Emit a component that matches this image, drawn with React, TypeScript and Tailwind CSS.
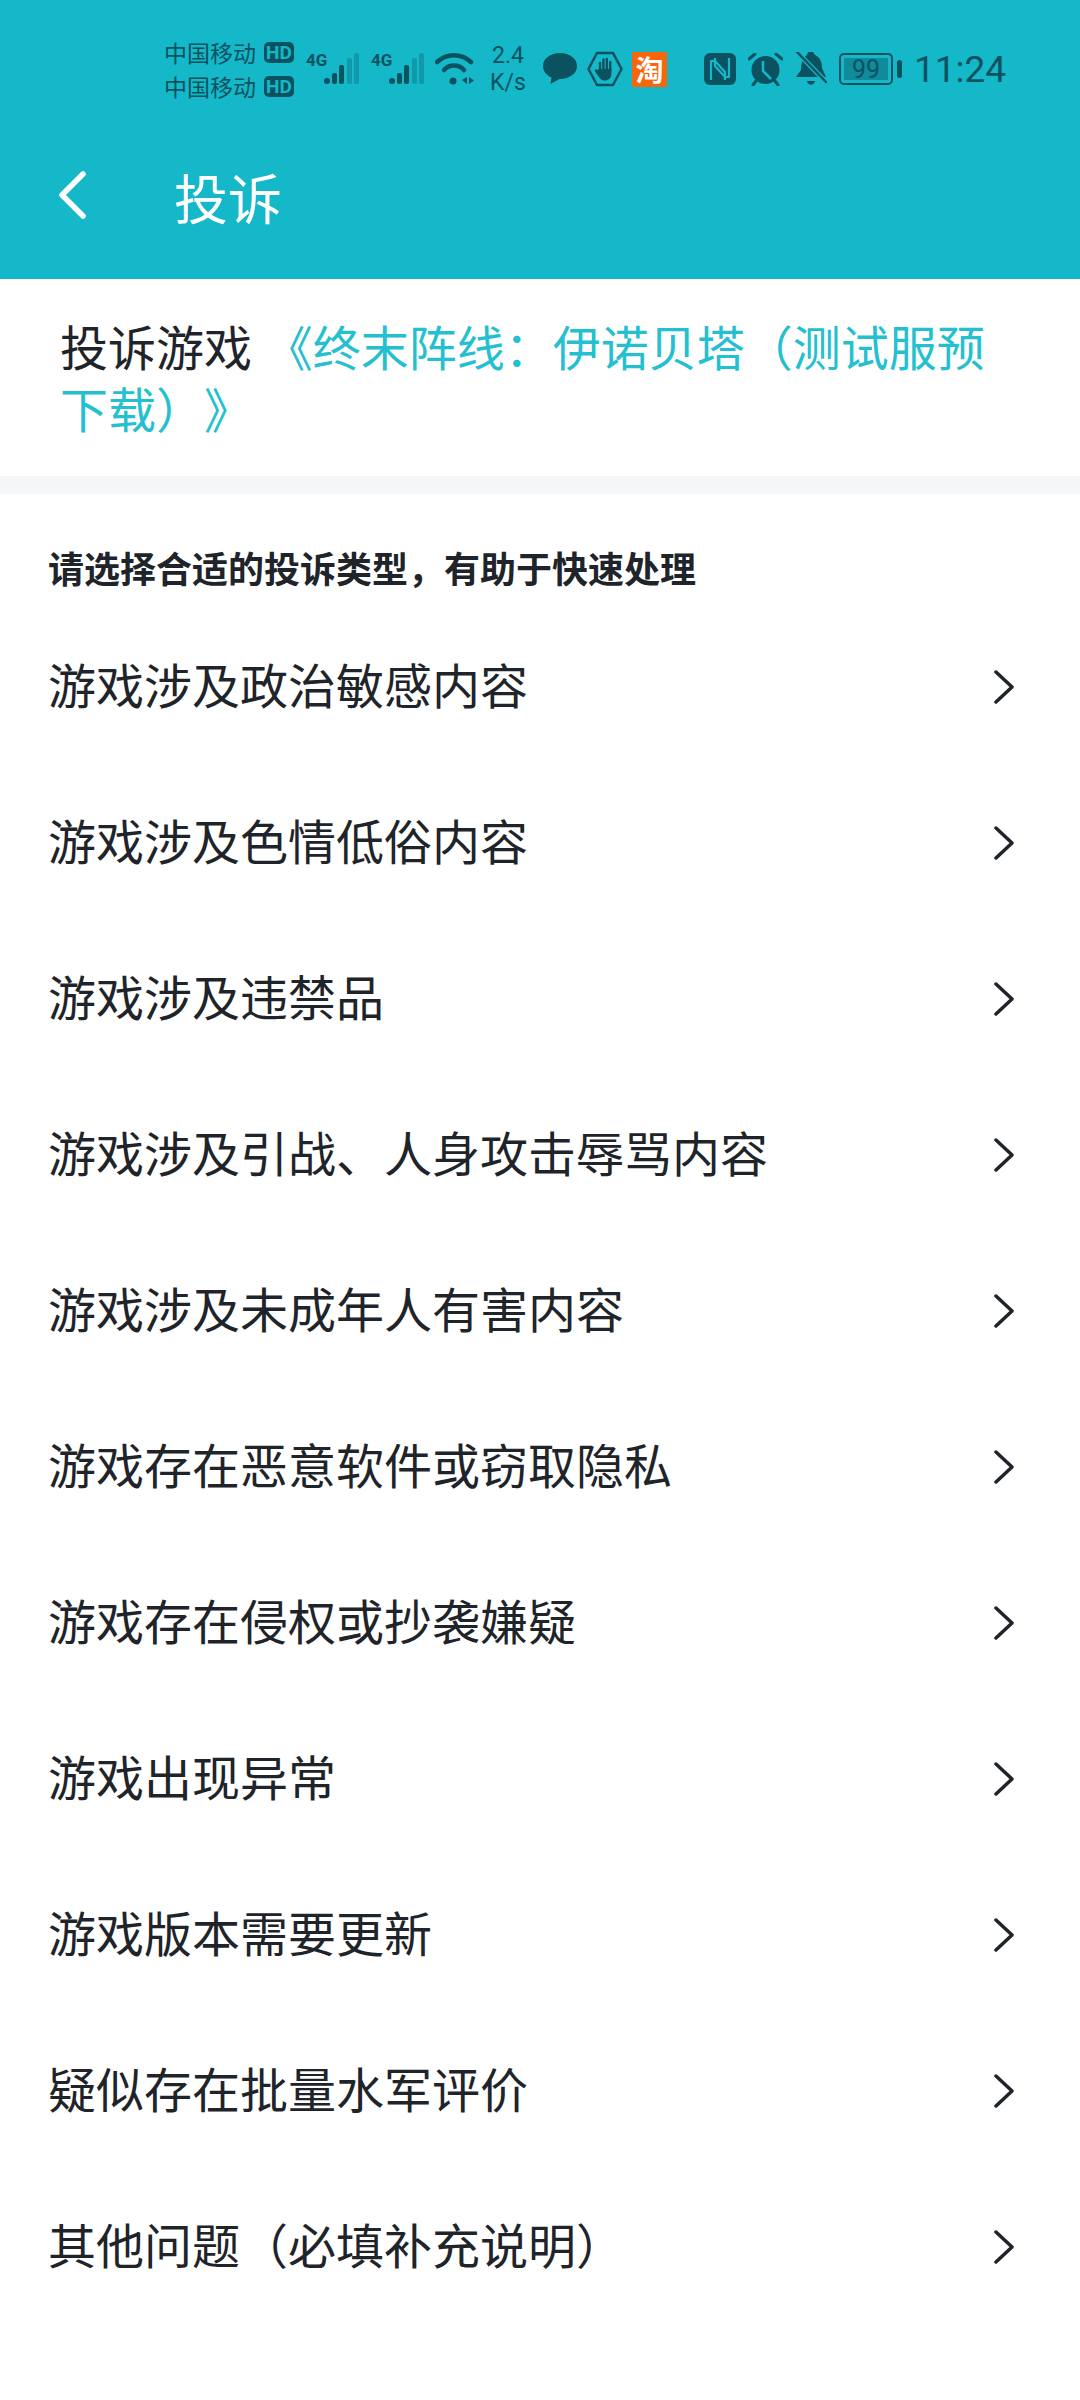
const rows = [
  "游戏涉及政治敏感内容",
  "游戏涉及色情低俗内容",
  "游戏涉及违禁品",
  "游戏涉及引战、人身攻击辱骂内容",
  "游戏涉及未成年人有害内容",
  "游戏存在恶意软件或窃取隐私",
  "游戏存在侵权或抄袭嫌疑",
  "游戏出现异常",
  "游戏版本需要更新",
  "疑似存在批量水军评价",
  "其他问题（必填补充说明）",
];

const ink = "#0a5260";
const teal = "#14b8c8";

const Signal = () => (
  <div className="flex items-end ml-[12px] h-[32px] w-[53px] shrink-0">
    <span className="self-start w-[18px] text-[17px] leading-[15px] font-bold text-[#0a5260] font-['Roboto',sans-serif]">4G</span>
    <svg width="35" height="32" viewBox="0 0 35 32" fill={ink} className="shrink-0">
      <rect x="0" y="25" width="6" height="6" rx="3" />
      <rect x="8" y="20" width="5" height="11" rx="2" />
      <rect x="15" y="12" width="5" height="19" rx="2" />
      <rect x="23" y="5" width="5" height="26" rx="2" opacity="0.3" />
      <rect x="30" y="0" width="5" height="31" rx="2" opacity="0.3" />
    </svg>
  </div>
);

const Carrier = () => (
  <div className="flex items-center justify-between h-[34px]">
    <span className="text-[23px] text-[#0a5260] leading-none">中国移动</span>
    <span className="flex h-[21px] w-[30px] items-center justify-center rounded-[5px] bg-[#0a5260] text-[#14b8c8] text-[19px] font-bold leading-none font-['Roboto',sans-serif]">HD</span>
  </div>
);

const StatusBar = () => (
  <div className="flex items-center h-[72px] pl-[164px]">
    <div className="flex flex-col w-[130px] shrink-0">
      <Carrier />
      <Carrier />
    </div>
    <Signal />
    <Signal />
    <svg width="40" height="32" viewBox="0 0 40 32" fill="none" stroke={ink} className="ml-[11px] shrink-0">
      <path d="M2 9 C12 0 26 0 36 9" strokeWidth="4.5" strokeLinecap="round" />
      <path d="M9 17 C14 11 24 11 29 17" strokeWidth="4.5" strokeLinecap="round" />
      <circle cx="18" cy="28" r="3.5" fill={ink} stroke="none" />
      <path d="M27 27 l5 -3 v7 z M34 24 l5 3.500 -5 3.500 z" fill={ink} stroke="none" />
    </svg>
    <div className="flex flex-col items-center w-[36px] ml-[15px] text-[23px] leading-[27px] text-[#0a5260] shrink-0 font-['Roboto',sans-serif]">
      <span>2.4</span>
      <span>K/s</span>
    </div>
    <svg width="34" height="32" viewBox="0 0 34 32" fill={ink} className="ml-[17px] shrink-0">
      <path d="M17 0 C7.500 0 0 5.500 0 13 c0 5 3.500 9.500 8.500 11.500 l-1 6.500 9 -5 h.5 c9.500 0 17 -5.500 17 -13 S26.500 0 17 0z" />
    </svg>
    <svg width="36" height="36" viewBox="0 0 36 36" className="ml-[10px] shrink-0">
      <path d="M10 2 H26 L34.500 18 L26 34 H10 L1.500 18 Z" fill="none" stroke={ink} strokeWidth="2.500" strokeLinejoin="round" />
      <path d="M13 20 V12 M16.400 19 V8.500 M19.800 19 V8 M23.200 20 V11" fill="none" stroke={ink} strokeWidth="2.400" strokeLinecap="round" />
      <path d="M11.800 18 H24.400 V23 c0 4 -3 6.500 -6.500 6.500 c-3 0 -4.500 -1.500 -6 -3.500 L8 20.500 c-1 -1.800 1.200 -3 2.500 -1.600 z" fill={ink} />
    </svg>
    <div className="ml-[9px] flex h-[35px] w-[35px] shrink-0 items-center justify-center bg-[#f8650a] text-[28px] font-bold leading-none text-white">淘</div>
    <svg width="32" height="32" viewBox="0 0 32 32" className="ml-[37px] shrink-0">
      <rect x="0" y="0" width="32" height="32" rx="6" fill={ink} />
      <path d="M7 27 V8 H11 L21 19 V27 M11 5 V13 L21 24 H25 V5" fill="none" stroke={teal} strokeWidth="2.200" strokeLinejoin="round" />
    </svg>
    <svg width="35" height="33" viewBox="0 0 35 33" className="ml-[12px] shrink-0" fill={ink}>
      <circle cx="17.500" cy="17" r="14" />
      <path d="M15 8 V18 L23 26" fill="none" stroke={teal} strokeWidth="2.500" />
      <path d="M1 6 L7 1 M34 6 L28 1 M5 32 L8 28 M30 32 L27 28" stroke={ink} strokeWidth="3" strokeLinecap="round" />
    </svg>
    <svg width="32" height="34" viewBox="0 0 32 34" className="ml-[12px] shrink-0" fill={ink}>
      <path d="M13 0 h5 l2 3 c5 2 7 7 7 13 l4 9 H1 l5 -7 c0 -7 2 -13 6 -15z" />
      <path d="M12 29 h8 c-1 5 -7 5 -8 0z" />
      <path d="M0 -2 L31 30" stroke={teal} strokeWidth="5" />
      <path d="M2 0 L31 30" stroke={ink} strokeWidth="2.500" strokeLinecap="round" />
    </svg>
    <div className="ml-[12px] flex items-center shrink-0">
      <div className="flex h-[32px] w-[54px] items-center justify-center rounded-[5px] border-[2.5px] border-[#0a5260] p-[3px]">
        <div className="flex h-full w-full items-center justify-center bg-[#0f8b9b] text-[25px] leading-none text-[#0a5260] font-['Roboto',sans-serif]">99</div>
      </div>
      <div className="ml-[4px] h-[18px] w-[5px] rounded-full bg-[#0a5260]" />
    </div>
    <span className="ml-[12px] text-[37px] leading-none text-[#0a5260] font-['Roboto',sans-serif]">11:24</span>
  </div>
);

export default function App() {
  return (
    <div className="w-[1080px] h-[2400px] bg-white overflow-hidden font-['Noto_Sans_CJK_SC','Noto_Sans',sans-serif] text-[#1e2429] [text-spacing-trim:space-all]">
      <header className="h-[279px] bg-[#14b8c8] pt-[33px]">
        <StatusBar />
        <div className="flex items-center h-[80px] mt-[52px]">
          <svg width="28" height="48" viewBox="0 0 28 48" fill="none" stroke="white" strokeWidth="5.500" strokeLinecap="round" strokeLinejoin="round" className="ml-[58px] mb-[5px] shrink-0">
            <path d="M25 3 L4 24 L25 45" />
          </svg>
          <span className="ml-[88px] text-[54px] text-white leading-none">投诉</span>
        </div>
      </header>

      <section className="h-[197px] pt-[35px] pl-[60px] pr-[66px] text-[48px] leading-[62px]">
        投诉游戏
        <span className="ml-[2px] text-[#25c0cf]"> 《终末阵线：伊诺贝塔（测试服预下载）》</span>
      </section>
      <div className="h-[18px] bg-[#f5f6f8]" />

      <p className="mt-[53px] pl-[48px] text-[36px] leading-[40px] font-bold">请选择合适的投诉类型，有助于快速处理</p>

      <ul className="mt-[22px]">
        {rows.map((row) => (
          <li key={row} className="flex items-center justify-between h-[156px] pl-[48px] pr-[66px] text-[48px]">
            <span className="mb-[8px]">{row}</span>
            <svg width="20" height="34" viewBox="0 0 20 34" fill="none" stroke="#1e2429" strokeWidth="3.500" strokeLinecap="round" strokeLinejoin="round" className="shrink-0">
              <path d="M2 2 L18 17 L2 32" />
            </svg>
          </li>
        ))}
      </ul>
    </div>
  );
}
